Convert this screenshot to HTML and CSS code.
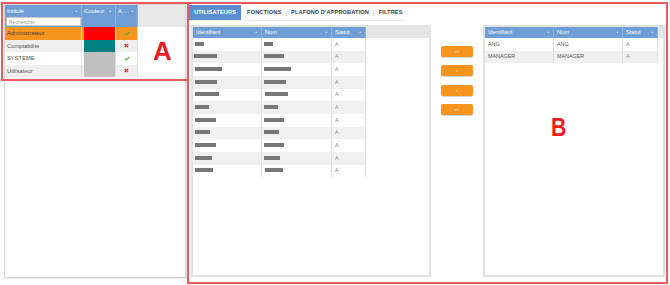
FILE: index.html
```html
<!DOCTYPE html>
<html lang="fr">
<head>
<meta charset="utf-8">
<title>Utilisateurs</title>
<link rel="stylesheet" href="styles.css">
</head>
<body>
<div class="page">
  <aside class="roles">
    <div class="roles-grid">
      <div class="hcell">
        <div class="hlabel"><span>Intitulé</span><span class="sort">▲</span></div>
        <input class="search" type="text" placeholder="Rechercher">
      </div>
      <div class="hcell"><div class="hlabel"><span>Couleur</span><span class="sort">▲</span></div></div>
      <div class="hcell"><div class="hlabel"><span>A...</span><span class="sort">▲</span></div></div>
      <div class="hfill"></div>

      <div class="rc name sel">Administrateur</div>
      <div class="rc color sel"><span class="swatch" style="background:#ff0000"></span></div>
      <div class="rc act sel"><svg class="ok" viewBox="0 0 6 5"><path d="M0.6 2.6 L2.2 4 L5.4 0.8"/></svg></div>
      <div class="rc fill"></div>

      <div class="rc name alt">Comptabilité</div>
      <div class="rc color alt"><span class="swatch" style="background:#008080"></span></div>
      <div class="rc act alt"><svg class="ko" viewBox="0 0 5 5"><path d="M0.8 0.8 L4.2 4.2 M4.2 0.8 L0.8 4.2"/></svg></div>
      <div class="rc fill"></div>

      <div class="rc name">SYSTEME</div>
      <div class="rc color"><span class="swatch" style="background:#c0c0c0"></span></div>
      <div class="rc act"><svg class="ok" viewBox="0 0 6 5"><path d="M0.6 2.6 L2.2 4 L5.4 0.8"/></svg></div>
      <div class="rc fill"></div>

      <div class="rc name alt">Utilisateur</div>
      <div class="rc color alt"><span class="swatch" style="background:#c0c0c0"></span></div>
      <div class="rc act alt"><svg class="ko" viewBox="0 0 5 5"><path d="M0.8 0.8 L4.2 4.2 M4.2 0.8 L0.8 4.2"/></svg></div>
      <div class="rc fill"></div>
    </div>
  </aside>

  <main class="main">
    <nav class="tabs">
      <span class="tab active">UTILISATEURS</span>
      <span class="tab">FONCTIONS</span>
      <span class="sep">|</span>
      <span class="tab">PLAFOND D'APPROBATION</span>
      <span class="sep">|</span>
      <span class="tab">FILTRES</span>
    </nav>

    <div class="content">
      <section class="panel panel-left">
        <div class="ugrid">
          <div class="uh"><span>Identifiant</span><span class="sort">▲</span></div>
          <div class="uh"><span>Nom</span><span class="sort">▲</span></div>
          <div class="uh"><span>Statut</span><span class="sort">▲</span></div>
          <div class="uh-fill"></div>

          <div class="uc"><span class="mask" style="width:9px"></span></div><div class="uc"><span class="mask" style="width:9px"></span></div><div class="uc st">A</div><div class="uc-fill"></div>
          <div class="uc alt"><span class="mask" style="width:23px;margin-left:-1px"></span></div><div class="uc alt"><span class="mask" style="width:20px"></span></div><div class="uc alt st">A</div><div class="uc-fill"></div>
          <div class="uc"><span class="mask" style="width:27px"></span></div><div class="uc"><span class="mask" style="width:27px"></span></div><div class="uc st">A</div><div class="uc-fill"></div>
          <div class="uc alt"><span class="mask" style="width:22px"></span></div><div class="uc alt"><span class="mask" style="width:22px"></span></div><div class="uc alt st">A</div><div class="uc-fill"></div>
          <div class="uc"><span class="mask" style="width:24px"></span></div><div class="uc"><span class="mask" style="width:23px;margin-left:1px"></span></div><div class="uc st">A</div><div class="uc-fill"></div>
          <div class="uc alt"><span class="mask" style="width:14px"></span></div><div class="uc alt"><span class="mask" style="width:14px"></span></div><div class="uc alt st">A</div><div class="uc-fill"></div>
          <div class="uc"><span class="mask" style="width:21px"></span></div><div class="uc"><span class="mask" style="width:20px"></span></div><div class="uc st">A</div><div class="uc-fill"></div>
          <div class="uc alt"><span class="mask" style="width:15px"></span></div><div class="uc alt"><span class="mask" style="width:15px"></span></div><div class="uc alt st">A</div><div class="uc-fill"></div>
          <div class="uc"><span class="mask" style="width:21px"></span></div><div class="uc"><span class="mask" style="width:20px"></span></div><div class="uc st">A</div><div class="uc-fill"></div>
          <div class="uc alt"><span class="mask" style="width:17px"></span></div><div class="uc alt"><span class="mask" style="width:16px"></span></div><div class="uc alt st">A</div><div class="uc-fill"></div>
          <div class="uc"><span class="mask" style="width:18px"></span></div><div class="uc"><span class="mask" style="width:18px;margin-left:1px"></span></div><div class="uc st">A</div><div class="uc-fill"></div>
        </div>
      </section>

      <div class="moves">
        <button class="mv" type="button">&gt;&gt;</button>
        <button class="mv" type="button">&gt;</button>
        <button class="mv" type="button">&lt;</button>
        <button class="mv" type="button">&lt;&lt;</button>
      </div>

      <section class="panel panel-right">
        <div class="ugrid ugrid-right">
          <div class="uh"><span>Identifiant</span><span class="sort">▲</span></div>
          <div class="uh"><span>Nom</span><span class="sort">▲</span></div>
          <div class="uh"><span>Statut</span><span class="sort">▲</span></div>
          <div class="uh-fill"></div>

          <div class="uc txt">ANG</div><div class="uc txt">ANG</div><div class="uc st">A</div><div class="uc-fill"></div>
          <div class="uc txt alt">MANAGER</div><div class="uc txt alt">MANAGER</div><div class="uc alt st">A</div><div class="uc-fill"></div>
        </div>
      </section>
    </div>
  </main>
</div>

<div class="annot annot-a"></div>
<div class="annot annot-b"></div>
<span class="mark mark-a">A</span>
<span class="mark mark-b">B</span>
</body>
</html>
```

FILE: styles.css
```css
* { box-sizing: border-box; margin: 0; padding: 0; }

html, body { background: #ffffff; }

body {
  width: 670px;
  height: 285px;
  overflow: hidden;
  position: relative;
  font-family: "Liberation Sans", Arial, sans-serif;
  color: #555555;
}

.page {
  display: flex;
  align-items: flex-start;
  padding: 4px 0 0 4px;
  gap: 3px;
  height: 285px;
}

/* ---------- left roles panel ---------- */
.roles {
  width: 182px;
  height: 274px;
  border: 1px solid #d6d6d6;
  box-shadow: 1px 1px 0 #e6e6e6;
  background: #ffffff;
}

.roles-grid {
  display: grid;
  grid-template-columns: 77px 34px 22px 1fr;
  grid-template-rows: 22px;
  grid-auto-rows: 12.5px;
}

.hcell {
  background: #6f9dd6;
  border-right: 1px solid #8fb4e2;
  padding: 3px 2px 0 2px;
  color: #ffffff;
  font-size: 5.8px;
}

.hfill { background: #e8e8e8; }

.hlabel {
  display: flex;
  justify-content: space-between;
  align-items: center;
  height: 6px;
  line-height: 6px;
}

.sort {
  font-size: 3.5px;
  color: #c4d6ee;
  padding-right: 1px;
}

.search {
  display: block;
  width: 75px;
  height: 9px;
  margin: 3px 0 0 -1px;
  border: 1px solid #c8c8c8;
  background: #ffffff;
  font-family: inherit;
  font-size: 5px;
  padding: 0 2px;
  outline: none;
}
.search::placeholder { color: #9a9a9a; }

.rc {
  display: flex;
  align-items: center;
  font-size: 5.8px;
  color: #555555;
  background: #ffffff;
}
.rc.alt { background: #efefef; }
.rc.sel { background: #f7941d; color: #444444; }
.rc.name { padding-left: 2px; border-right: 1px solid #e2e2e2; }
.rc.color { padding-left: 2px; border-right: 1px solid #e2e2e2; align-items: stretch; }
.rc.act { justify-content: center; border-right: 1px solid #e2e2e2; }
.rc.fill { background: #ffffff; }

.swatch { display: block; flex: 1; }

.ok { width: 6px; height: 5px; }
.ok path { fill: none; stroke: #52b043; stroke-width: 1.1; }
.ko { width: 5px; height: 5px; }
.ko path { fill: none; stroke: #e02a2a; stroke-width: 1.2; }

/* ---------- main area ---------- */
.main {
  width: 478px;
  display: flex;
  flex-direction: column;
  margin-left: -1px;
}

.tabs {
  display: flex;
  align-items: center;
  width: 215px;
  height: 17px;
  margin: 0 0 0 1px;
  padding-top: 1px;
  border-bottom: 1px solid #eeeeee;
  font-size: 5.6px;
  font-weight: bold;
  color: #3c3c3c;
  letter-spacing: 0.15px;
  white-space: nowrap;
}

.tab { padding: 0 3px; line-height: 15px; flex-shrink: 0; }
.tab.active {
  background: #5b8ed0;
  color: #ffffff;
  padding: 0 5px;
  margin-right: 3px;
}
.sep { color: #9a9a9a; font-weight: normal; padding: 0 1px; flex-shrink: 0; }

.content {
  display: flex;
  margin-top: 4px;
  padding-left: 3px;
  height: 252px;
}

.panel {
  height: 252px;
  border: 2px solid #e1e1e1;
  background: #ffffff;
}
.panel-left { width: 240px; }
.panel-right { width: 182px; }

.ugrid {
  display: grid;
  grid-template-columns: 69px 70px 34px 1fr;
  grid-template-rows: 11px;
  grid-auto-rows: 12.66px;
}
.ugrid-right { grid-template-columns: 69px 69px 35px 1fr; }

.uh {
  background: #6f9dd6;
  color: #ffffff;
  font-size: 5.6px;
  display: flex;
  justify-content: space-between;
  align-items: center;
  padding: 0 2px 1px 3px;
  border-right: 1px solid #8fb4e2;
}
.uh-fill { background: #e6e6e6; }

.uc {
  background: #ffffff;
  border-right: 1px solid #e0e0e0;
  display: flex;
  align-items: center;
  padding: 0 2px 1px 2px;
  font-size: 5.4px;
  color: #666666;
}
.uc.alt { background: #f0f0f0; }
.uc.st { padding-left: 3px; color: #8a8a8a; }
.uc.txt { padding-left: 3px; color: #555555; }
.uc-fill { background: transparent; }

.mask {
  display: block;
  height: 4px;
  background: #777777;
}

.moves {
  width: 52px;
  display: flex;
  flex-direction: column;
  align-items: center;
  gap: 8.4px;
  padding-top: 21px;
}

.mv {
  width: 32px;
  height: 11px;
  border: none;
  border-radius: 2px;
  background: #f7941d;
  box-shadow: 0 1px 1px rgba(0,0,0,0.18);
  color: #ffffff;
  font-family: inherit;
  font-size: 4px;
  line-height: 11px;
}

/* ---------- annotation overlays ---------- */
.annot {
  position: absolute;
  border: 2px solid #ec5a60;
  pointer-events: none;
}
.annot-a { left: 1px; top: 2px; width: 188px; height: 79px; }
.annot-b { left: 187px; top: 2px; width: 481px; height: 282px; }

.mark {
  position: absolute;
  font-family: "Liberation Sans", Arial, sans-serif;
  font-weight: bold;
  color: #ec1c24;
  font-size: 26px;
  line-height: 26px;
}
.mark-a { left: 153px; top: 38px; }
.mark-b { left: 551px; top: 114px; transform: scaleX(0.82); transform-origin: left top; }
```
